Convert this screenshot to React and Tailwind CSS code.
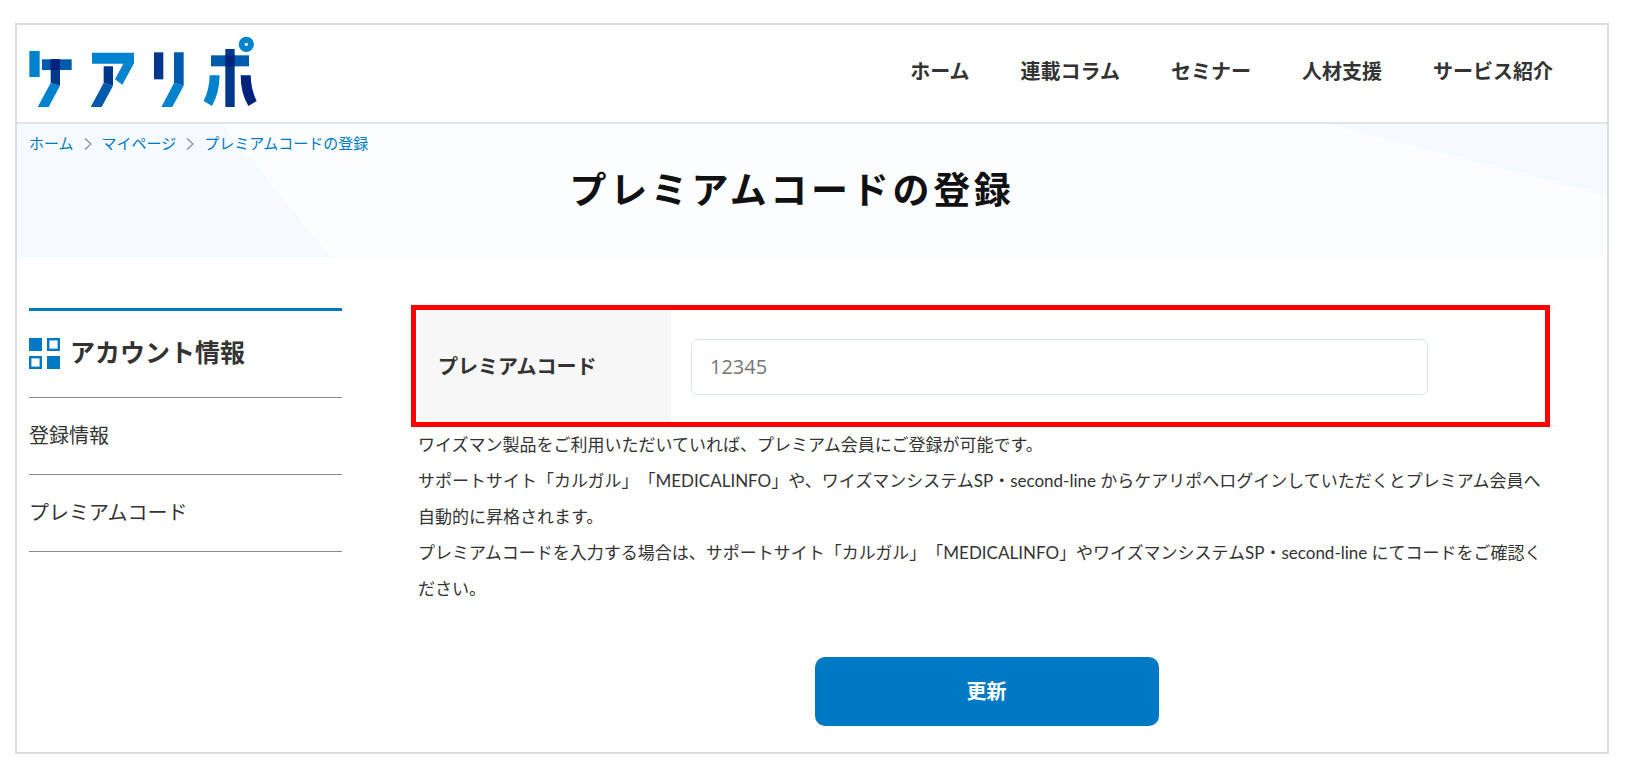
const NAV_ITEMS = ["ホーム", "連載コラム", "セミナー", "人材支援", "サービス紹介"];
const SIDE_ITEMS = ["登録情報", "プレミアムコード"];

function Logo() {
  return (
    <svg viewBox="87 105 684 219" className="h-[73px] w-[228px]" role="img" aria-label="ケアリポ">
      <g fill="#0083cf">
        <rect x="88" y="153" width="31" height="78" />
        <polygon points="152,249 180,257 146,321 113,321" />
        <polygon points="276,158 402,158 402,190 367,254 345,238 370,191 276,191" />
        <polygon points="522,249 551,257 517,321 484,321" />
        <path d="M629 226H659Q658 280 636 318L611 303Q628 270 629 226Z" />
      </g>
      <g fill="#005bac">
        <rect x="126" y="178" width="89" height="32" />
        <polygon points="311,249 339,257 305,321 272,321" />
        <polygon points="522,157 551,157 551,257 522,249" />
        <rect x="633" y="166" width="114" height="33" />
      </g>
      <g fill="#00378b">
        <polygon points="152,178 180,178 180,257 152,249" />
        <polygon points="311,199 339,199 339,257 311,249" />
        <rect x="462" y="157" width="28" height="81" />
        <rect x="676" y="147" width="28" height="174" />
      </g>
      <g fill="#00247d">
        <rect x="152" y="178" width="28" height="32" />
        <rect x="676" y="166" width="28" height="33" />
        <path d="M722 226H752Q753 270 770 303L745 318Q722 280 722 226Z" />
      </g>
      <circle cx="739" cy="133" r="14" fill="none" stroke="#0083cf" strokeWidth="18" />
    </svg>
  );
}

function Chevron() {
  return (
    <svg viewBox="0 0 8 12" className="h-3 w-2" fill="none" stroke="#8c8c8c" strokeWidth="1.2" aria-hidden="true">
      <path d="M1 0.5L7 6L1 11.5" />
    </svg>
  );
}

function GridIcon() {
  return (
    <svg viewBox="0 0 31 31" className="size-[31px] shrink-0" aria-hidden="true">
      <g fill="#0079c5">
        <rect x="0" y="0" width="13" height="13" />
        <rect x="18" y="18" width="13" height="13" />
      </g>
      <g fill="none" stroke="#0079c5" strokeWidth="2.4">
        <rect x="19.2" y="1.2" width="10.6" height="10.6" />
        <rect x="1.2" y="19.2" width="10.6" height="10.6" />
      </g>
    </svg>
  );
}

export default function App() {
  return (
    <div className="bg-white pt-[23px] pr-[17px] pb-6 pl-[15px] font-['Inter','Noto_Sans_CJK_JP',sans-serif] text-[#333]">
      <div className="border-2 border-[#dcdddf]">
        <header className="flex h-[99px] items-start justify-between border-b-2 border-[#e2e3e4] pt-[10px] pr-[54px] pl-3">
          <a href="#home"><Logo /></a>
          <nav className="flex gap-[51px] pt-[22px]">
            {NAV_ITEMS.map((label) => (
              <a key={label} href="#nav" className="text-xl leading-[30px] font-bold whitespace-nowrap">{label}</a>
            ))}
          </nav>
        </header>

        <div className="relative h-[134px] bg-[#fcfdff] pr-[52px] pl-3">
          <svg className="absolute top-0 left-0 h-[134px] w-[314px]" viewBox="0 0 314 134" aria-hidden="true">
            <polygon points="0,0 205,0 314,134 0,134" fill="#f5faff" />
          </svg>
          <svg className="absolute top-0 right-0 h-[72px] w-[280px]" viewBox="0 0 280 72" aria-hidden="true">
            <polygon points="0,0 280,0 280,72" fill="#f5faff" />
          </svg>
          <nav className="relative flex items-center gap-[10px] pt-2 text-[15px] leading-6 text-[#0079c5]">
            <a href="#home">ホーム</a>
            <Chevron />
            <a href="#mypage">マイページ</a>
            <Chevron />
            <a href="#premium">プレミアムコードの登録</a>
          </nav>
          <h1 className="relative pt-[9px] text-center text-[37px] leading-[52px] font-bold tracking-widest text-[#111]">プレミアムコードの登録</h1>
        </div>

        <div className="flex items-start gap-[76px] pt-[50px] pr-[52px] pb-[26px] pl-3">
          <aside className="w-[313px] shrink-0 border-t-3 border-[#0079c5]">
            <h2 className="flex h-[87px] items-center gap-[10px] border-b border-[#888] pb-[2px] text-[25px] leading-[38px] font-bold">
              <GridIcon />
              アカウント情報
            </h2>
            <ul>
              {SIDE_ITEMS.map((label) => (
                <li key={label} className="border-b border-[#888]">
                  <a href="#account" className="flex h-[76px] items-center text-xl">{label}</a>
                </li>
              ))}
            </ul>
          </aside>

          <form className="min-w-0 flex-1" onSubmit={(e) => e.preventDefault()}>
            <div className="relative flex h-[118px] border-y border-[#eee]">
              <label htmlFor="code" className="flex w-[253px] shrink-0 items-center bg-[#f7f7f7] pl-5 text-xl font-bold">プレミアムコード</label>
              <div className="flex flex-1 items-center pr-[127px] pl-5">
                <input
                  id="code"
                  type="text"
                  placeholder="12345"
                  className="h-14 w-full rounded-md border border-[#dbe5eb] bg-white px-[18px] pb-[2px] font-['Open_Sans','Noto_Sans_CJK_JP',sans-serif] text-xl placeholder:text-[#757575]"
                />
              </div>
              <div className="pointer-events-none absolute -top-1 right-[5px] -bottom-[2px] -left-[7px] border-5 border-[#ff0000]" />
            </div>
            <p className="pt-[1px] font-['Lato','Noto_Sans_CJK_JP',sans-serif] text-[17px] leading-9 [text-spacing-trim:space-all]">
              ワイズマン製品をご利用いただいていれば、プレミアム会員にご登録が可能です。<br />
              サポートサイト「カルガル」「MEDICALINFO」や、ワイズマンシステムSP・second-line からケアリポへログインしていただくとプレミアム会員へ自動的に昇格されます。<br />
              プレミアムコードを入力する場合は、サポートサイト「カルガル」「MEDICALINFO」やワイズマンシステムSP・second-line にてコードをご確認ください。
            </p>
            <div className="flex justify-center pt-[50px]">
              <button type="submit" className="h-[69px] w-[344px] rounded-[10px] bg-[#0079c5] text-xl font-bold text-white">更新</button>
            </div>
          </form>
        </div>
      </div>
    </div>
  );
}
